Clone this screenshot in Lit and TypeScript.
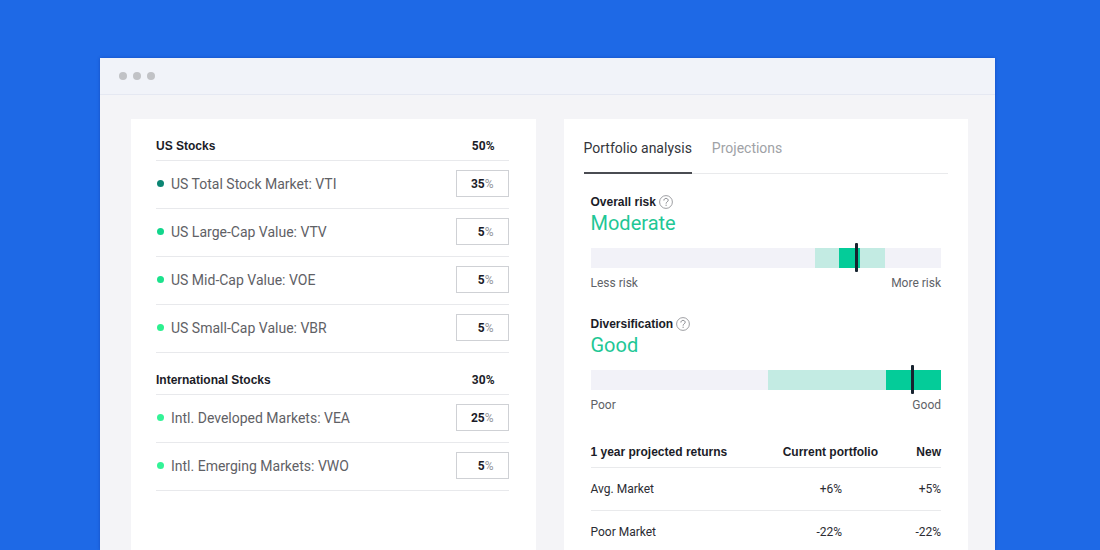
import { LitElement, html, css } from "lit";
import { customElement, property, state } from "lit/decorators.js";

interface Holding {
  name: string;
  value: number;
  color: string;
}

interface Group {
  title: string;
  total: string;
  holdings: Holding[];
}

const GROUPS: Group[] = [
  {
    title: "US Stocks",
    total: "50%",
    holdings: [
      { name: "US Total Stock Market: VTI", value: 35, color: "#0b8573" },
      { name: "US Large-Cap Value: VTV", value: 5, color: "#12d68c" },
      { name: "US Mid-Cap Value: VOE", value: 5, color: "#1be28c" },
      { name: "US Small-Cap Value: VBR", value: 5, color: "#2cf08f" },
    ],
  },
  {
    title: "International Stocks",
    total: "30%",
    holdings: [
      { name: "Intl. Developed Markets: VEA", value: 25, color: "#33f397" },
      { name: "Intl. Emerging Markets: VWO", value: 5, color: "#33f397" },
    ],
  },
];

@customElement("allocation-panel")
class AllocationPanel extends LitElement {
  static styles = css`
    :host {
      display: block;
      padding: 0 27px 24px 25px;
      background: #fff;
    }
    .head,
    .row {
      display: flex;
      justify-content: space-between;
      box-sizing: border-box;
      border-bottom: 1px solid #e8e9ec;
    }
    .head {
      height: 42px;
      align-items: flex-end;
      padding: 0 14px 6px 0;
      font: 700 12px/16px Roboto, sans-serif;
      color: #1b1c28;
    }
    .title {
      margin: 0;
      font: 700 12px/16px "Liberation Sans", sans-serif;
    }
    .row {
      height: 48px;
      align-items: center;
      padding-bottom: 2px;
    }
    .name {
      display: flex;
      align-items: center;
      gap: 7px;
      font-size: 14px;
      line-height: 20px;
      color: #5f6166;
    }
    .dot {
      width: 7px;
      height: 7px;
      margin-left: 1px;
      border-radius: 50%;
    }
    .field {
      display: flex;
      align-items: center;
      justify-content: flex-end;
      box-sizing: border-box;
      width: 53px;
      height: 27px;
      padding-right: 14px;
      border: 1px solid #cfd1d5;
      font: 400 12px/16px Roboto, sans-serif;
      color: #94969b;
    }
    .value {
      width: 24px;
      padding: 0;
      border: 0;
      outline: 0;
      background: none;
      font: 700 12px/16px Roboto, sans-serif;
      text-align: right;
      color: #1b1c28;
    }
  `;

  render() {
    return GROUPS.map(
      (group) => html`
        <section>
          <header class="head">
            <h2 class="title">${group.title}</h2>
            <span>${group.total}</span>
          </header>
          ${group.holdings.map(
            (h, i) => html`
              <div class="row">
                <label class="name" for="${group.title[0]}${i}">
                  <span class="dot" style="background:${h.color}"></span>${h.name}
                </label>
                <span class="field">
                  <input class="value" id="${group.title[0]}${i}" inputmode="numeric" .value=${String(h.value)} />%
                </span>
              </div>
            `
          )}
        </section>
      `
    );
  }
}

@customElement("range-meter")
class RangeMeter extends LitElement {
  @property() label = "";
  @property() rating = "";
  @property() low = "";
  @property() high = "";
  @property({ type: Array }) wide: number[] = [0, 0];
  @property({ type: Array }) core: number[] = [0, 0];
  @property({ type: Number }) marker = 0;

  static styles = css`
    :host {
      display: block;
    }
    .label {
      display: flex;
      align-items: center;
      gap: 3px;
      margin: 0;
      font: 700 12px/16px "Liberation Sans", sans-serif;
      color: #1b1c28;
    }
    .help {
      display: flex;
      padding: 0;
      border: 0;
      background: none;
      color: #85878c;
    }
    .rating {
      margin: 0;
      font-size: 20px;
      line-height: 26px;
      color: #1fc796;
    }
    .bar {
      position: relative;
      height: 20px;
      margin-top: 12px;
      background: #f2f2f8;
    }
    .wide,
    .core {
      position: absolute;
      top: 0;
      bottom: 0;
      background: #c3ebe3;
    }
    .core {
      background: #04cc99;
    }
    .marker {
      position: absolute;
      top: -5px;
      bottom: -4px;
      width: 3px;
      border-radius: 1px;
      background: #17232f;
    }
    .ends {
      display: flex;
      justify-content: space-between;
      margin-top: 7px;
      font-size: 12px;
      line-height: 16px;
      color: #606267;
    }
  `;

  render() {
    const span = (r: number[]) => `left:${r[0]}%;width:${r[1] - r[0]}%`;
    return html`
      <h3 class="label">
        ${this.label}
        <button class="help" aria-label="About ${this.label}">
          <svg width="14" height="14" viewBox="0 0 14 14" fill="none" stroke="currentColor">
            <circle cx="7" cy="7" r="6.4" stroke-width="0.8" />
            <path d="M4.9 5.5C4.9 4.2 5.8 3.4 7 3.4S9.2 4.2 9.2 5.3C9.2 6.8 7.1 6.8 7.1 8.6" />
            <path d="M7.1 9.7V10.9" />
          </svg>
        </button>
      </h3>
      <p class="rating">${this.rating}</p>
      <div class="bar">
        <div class="wide" style=${span(this.wide)}></div>
        <div class="core" style=${span(this.core)}></div>
        <div class="marker" style="left:${this.marker}%"></div>
      </div>
      <div class="ends"><span>${this.low}</span><span>${this.high}</span></div>
    `;
  }
}

@customElement("analysis-panel")
class AnalysisPanel extends LitElement {
  @state() private active = 0;

  static styles = css`
    :host {
      display: block;
      background: #fff;
    }
    .tabs {
      display: flex;
      gap: 20px;
      margin: 0 20px;
      border-bottom: 1px solid #e9eaec;
    }
    .tab {
      height: 55px;
      margin-bottom: -1px;
      padding: 5px 0 0;
      border: 0;
      border-bottom: 2px solid transparent;
      background: none;
      font: 400 14px/20px Roboto, sans-serif;
      color: #a0a2a6;
    }
    .tab[aria-selected="true"] {
      border-color: #4a4c52;
      color: #33353b;
    }
    .body {
      display: grid;
      gap: 25px;
      padding: 20px 27px;
    }
    .returns {
      width: 100%;
      margin-top: 6px;
      border-collapse: collapse;
      font-size: 12px;
      line-height: 16px;
      color: #2b2c33;
    }
    .returns th,
    .returns td {
      padding: 13px 0;
      text-align: right;
      font-weight: 400;
      border-bottom: 1px solid #e9eaec;
    }
    .returns thead th {
      padding: 0 0 7px;
      font: 700 12px/16px "Liberation Sans", sans-serif;
      color: #1b1c28;
    }
    .returns th:first-child {
      text-align: left;
    }
    .returns td:nth-child(2) {
      padding-right: 36px;
    }
    .returns th:last-child {
      width: 63px;
    }
  `;

  render() {
    return html`
      <div class="tabs" role="tablist">
        ${["Portfolio analysis", "Projections"].map(
          (t, i) => html`<button
            class="tab"
            role="tab"
            aria-selected=${this.active === i}
            @click=${() => (this.active = i)}
          >${t}</button>`
        )}
      </div>
      <div class="body">
        <range-meter
          label="Overall risk" rating="Moderate" low="Less risk" high="More risk"
          .wide=${[64, 84]} .core=${[71, 77]} .marker=${75.4}
        ></range-meter>
        <range-meter
          label="Diversification" rating="Good" low="Poor" high="Good"
          .wide=${[50.6, 84.4]} .core=${[84.4, 100]} .marker=${91.5}
        ></range-meter>
        <table class="returns">
          <thead>
            <tr><th>1 year projected returns</th><th>Current portfolio</th><th>New</th></tr>
          </thead>
          <tbody>
            <tr><th>Avg. Market</th><td>+6%</td><td>+5%</td></tr>
            <tr><th>Poor Market</th><td>-22%</td><td>-22%</td></tr>
          </tbody>
        </table>
      </div>
    `;
  }
}

@customElement("app-root")
class AppRoot extends LitElement {
  static styles = css`
    :host {
      display: flex;
      box-sizing: border-box;
      height: 100vh;
      padding: 58px 105px 0 100px;
      overflow: hidden;
      background: #1e69e6;
      font-family: Roboto, sans-serif;
    }
    .window {
      display: flex;
      flex-direction: column;
      flex: 1;
      background: #f4f4f7;
      box-shadow: 0 0 3px rgba(0, 30, 120, 0.35);
    }
    .titlebar {
      display: flex;
      flex-shrink: 0;
      align-items: center;
      gap: 6px;
      height: 36px;
      padding-left: 19px;
      background: #f1f3f9;
      border-bottom: 1px solid #e5e8f2;
    }
    .light {
      width: 8px;
      height: 8px;
      border-radius: 50%;
      background: #c1c2c6;
    }
    .panels {
      display: grid;
      grid-template-columns: 1fr 1fr;
      gap: 28px;
      flex: 1;
      padding: 24px 27px 0 31px;
    }
  `;

  render() {
    return html`
      <main class="window">
        <div class="titlebar">
          <span class="light"></span><span class="light"></span><span class="light"></span>
        </div>
        <div class="panels">
          <allocation-panel></allocation-panel>
          <analysis-panel></analysis-panel>
        </div>
      </main>
    `;
  }
}
